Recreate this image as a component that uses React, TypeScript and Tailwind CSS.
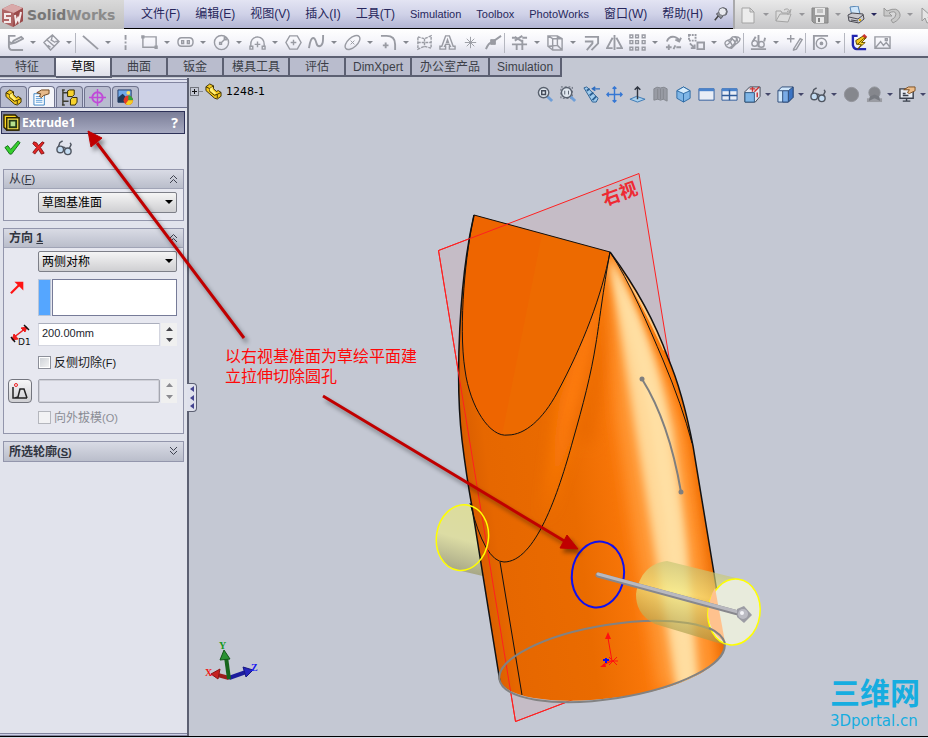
import { useState } from 'react';
import type { ReactNode } from 'react';
import clsx from 'clsx';

interface Tool {
  name: string;
  icon: ReactNode;
  menu?: boolean;
  divider?: boolean;
  active?: boolean;
}

const menus = ['文件(F)', '编辑(E)', '视图(V)', '插入(I)', '工具(T)', 'Simulation', 'Toolbox', 'PhotoWorks', '窗口(W)', '帮助(H)'];

const commandTabs = ['特征', '草图', '曲面', '钣金', '模具工具', '评估', 'DimXpert', '办公室产品', 'Simulation'];

const glasses = (
  <>
    <path d="M2 10 4 4l3-2M14 10l2-4-1-2" fill="none" stroke="#4f5560" strokeWidth="1.5" />
    <circle cx="4.500" cy="11" r="3.500" fill="#c4dcf2" stroke="#4f5560" strokeWidth="1.500" />
    <circle cx="12.500" cy="13" r="3.500" fill="#c4dcf2" stroke="#4f5560" strokeWidth="1.500" />
    <path d="M7 9q2-1 3 1" fill="none" stroke="#4f5560" strokeWidth="1.5" />
  </>
);

const partIcon = (
  <>
    <path d="M1 4l4-3 4 2v3l3 3 2-1 3 2v4l-4 3-3-1-9-8z" fill="#f4c81c" stroke="#3a2e00" />
    <path d="M1 4l4 2 4-3M5 6v3l5 4 3-1 4-2M13 12v4" fill="none" stroke="#3a2e00" />
    <path d="M5 6l3-2v3l4 4-2 1-5-4z" fill="#fff07a" />
  </>
);

const quickTools: Tool[] = [
  { name: 'New', menu: true, icon: <path d="M3 2h8l4 4v11H3zM11 2v4h4" fill="#ececec" stroke="#a3a3a3" /> },
  {
    name: 'Open',
    menu: true,
    icon: <path d="M1 15V5h5l1 2h6v2M1 15l4-7h11l-3 8zM9 4q4-3 6 2M12 5l3 2 1-4" fill="#dcdcdc" stroke="#a3a3a3" />,
  },
  {
    name: 'Save',
    menu: true,
    icon: (
      <>
        <path d="M1 2h16v15H3l-2-2z" fill="#9b9b9b" stroke="#858585" />
        <path d="M4 2h10v7H4zM5 11h8v6H5z" fill="#e8e8e8" />
        <path d="M6 4h6M6 6h6" stroke="#9b9b9b" />
        <path d="M7 12h2v4H7z" fill="#858585" />
      </>
    ),
  },
  {
    name: 'Print',
    menu: true,
    active: true,
    icon: (
      <>
        <path d="M3 1l8-1 2 8-8 2z" fill="#cfe6fa" stroke="#5585b5" />
        <path d="M1 9l4-2 11 1 1 5-5 4-10-2z" fill="#c9c9cf" stroke="#4a4a52" />
        <path d="M2 11l9 2 5-4M4 14l7 1" fill="none" stroke="#4a4a52" />
        <path d="M12 14h2" stroke="#e8b400" strokeWidth="2" />
      </>
    ),
  },
  {
    name: 'Undo',
    menu: true,
    icon: <path d="M1 2v8h8l-3-3q6-3 7 1 0 4-5 6l2 3q8-4 7-9-2-8-13-3z" fill="#c8c8c8" stroke="#999" />,
  },
  { name: 'Select', icon: <path d="M3 2v13l3-3 2 5 3-1-2-5h4z" fill="#e5e5e5" stroke="#999" /> },
];

const sketchTools: Tool[] = [
  {
    name: 'Sketch',
    menu: true,
    icon: <path d="M9 2H2v11q0 4 4 4h11M5 10l2-3 8-4 2 2-8 4zM2 8l3 2" strokeWidth="2" />,
  },
  {
    name: 'Smart Dimension',
    menu: true,
    icon: <path d="M1 9l3-3 8 7-4 4zM4 6l6-5 7 7-5 5M5 12l3 2M8 6l5 3M10 1l-1 5M17 8h-4" strokeWidth="1.500" />,
  },
  { name: 'Line', menu: true, divider: true, icon: <path d="M1 2l16 14" strokeWidth="2" /> },
  { name: 'Centerline', icon: <path d="M8 1v16" strokeWidth="2" strokeDasharray="5 2 2 2" /> },
  { name: 'Rectangle', menu: true, icon: <path d="M2 3h14v11H2zM1 2h2v2H1zM15 13h2v2h-2z" strokeWidth="1.5" /> },
  {
    name: 'Slot',
    menu: true,
    icon: <path d="M5 4h8q4 0 4 4.500t-4 4.500H5q-4 0-4-4.500T5 4zM5 7h2v3H5zM11 7h2v3h-2z" strokeWidth="1.500" />,
  },
  {
    name: 'Circle',
    menu: true,
    icon: (
      <>
        <circle cx="9" cy="9" r="7.500" strokeWidth="1.500" />
        <path d="M7 9h2v2H7zM9 9l4-4M12 4h2v2h-2z" strokeWidth="1.500" />
      </>
    ),
  },
  {
    name: 'Arc',
    menu: true,
    icon: <path d="M2 13Q1 4 9 3q8 1 7 10M1 13h3v3H1zM14 13h3v3h-3zM9 8v6M6 11h6" strokeWidth="1.500" />,
  },
  { name: 'Polygon', icon: <path d="M5 2h8l4 7-4 7H5L1 9zM9 6v6M6 9h6" strokeWidth="1.5" /> },
  {
    name: 'Spline',
    menu: true,
    icon: <path d="M1 15C2 8 4 2 7 5c3 4 1 8 5 8 4-1 4-5 4-12" strokeWidth="2" />,
  },
  {
    name: 'Ellipse',
    menu: true,
    icon: (
      <>
        <ellipse cx="9" cy="9" rx="9.500" ry="5" transform="rotate(-42 9 9)" strokeWidth="1.500" />
        <path d="M7 7l4 4M11 7l-4 4" />
      </>
    ),
  },
  { name: 'Fillet', menu: true, icon: <path d="M1 2h6q9 0 9 9v6M6 9v6M3 12h6" strokeWidth="2" /> },
  {
    name: 'Plane',
    icon: <path d="M2 3l7 2 7-3v13l-7-2-7 3zM9 5v9M2 9h14" strokeWidth="1.500" strokeDasharray="3 1" />,
  },
  {
    name: 'Text',
    icon: <path d="M1 16v-3h2L7 2h4l4 11h2v3h-6v-3h1l-1-2H7l-1 2h1v3zM9 6L8 9h2z" strokeWidth="1.5" />,
  },
  { name: 'Point', icon: <path d="M9 3v12M3 9h12M5 5l8 8M13 5l-8 8" /> },
  {
    name: 'Tangent',
    icon: (
      <>
        <path d="M1 16Q4 9 7 9l10-7" strokeWidth="2" />
        <path d="M6 6h5v5H6z" fill="#999ba3" />
      </>
    ),
  },
  {
    name: 'Trim',
    menu: true,
    divider: true,
    icon: <path d="M1 4h5M12 4h5M1 11h16M4 3l8 5M4 7l8-5M12 6v11M6 10v7" strokeWidth="2" />,
  },
  { name: 'Convert', menu: true, icon: <path d="M1 2h10l5 3v12H6l-5-4zM6 5h10M6 5v12M1 2l5 3M11 2v10l5 5M2 13l9-1" strokeWidth="1.500" /> },
  { name: 'Offset', icon: <path d="M2 3h14v7l-7 7M2 8h8v2l-6 7" strokeWidth="2" /> },
  { name: 'Mirror', icon: <path d="M7 4L1 15h6M11 4l6 11h-6M9 1v16" strokeWidth="2" /> },
  {
    name: 'Pattern',
    menu: true,
    icon: <path d="M1 1h3v3H1zM7 1h3v3H7zM14 1h3v3h-3zM1 7h3v3H1zM7 7h3v3H7zM14 7h3v3h-3zM1 14h3v3H1zM7 14h3v3H7zM14 14h3v3h-3z" strokeWidth="1.5" />,
  },
  { name: 'Modify', icon: <path d="M2 8q2-6 8-5 4 1 5 4M11 6l4 2 2-4M1 14h6M4 11v6M9 16l2-4M12 14h5" strokeWidth="2" /> },
  {
    name: 'Move',
    menu: true,
    icon: (
      <>
        <path d="M1 1h7v6H1z" strokeWidth="2" strokeDasharray="2 1" />
        <path d="M10 9h7v7h-7zM2 10l5 5M7 11v4H3" strokeWidth="2" />
      </>
    ),
  },
  {
    name: 'Mesh',
    icon: <path d="M1 10q0-3 5-4l3-3q6-1 8 2 0 3-5 6l-4 4q-6 0-7-5zM4 7q4 1 5 7M7 5q5 1 5 6M10 3q5 1 4 5M2 12q4-1 7-8M5 15q6-2 9-11" strokeWidth="1.5" />,
  },
  {
    name: 'Display Relations',
    menu: true,
    divider: true,
    icon: (
      <>
        <path d="M1 16h16M9 1v13M3 8l3-5M15 8l1-4" strokeWidth="2" />
        <circle cx="5" cy="10" r="3" strokeWidth="1.5" />
        <circle cx="12" cy="11" r="3" strokeWidth="1.5" />
      </>
    ),
  },
  { name: 'Repair', icon: <path d="M1 5h8M5 1v8M8 16l7-11 2 1-6 10-3 1z" strokeWidth="1.5" /> },
  {
    name: 'Quick Snaps',
    menu: true,
    divider: true,
    icon: (
      <>
        <path d="M1 2h16M2 2v15" strokeWidth="2" />
        <circle cx="10" cy="10" r="5.500" strokeWidth="1.500" />
        <circle cx="10" cy="10" r="1" strokeWidth="2" />
      </>
    ),
  },
  {
    name: 'Rapid Sketch',
    divider: true,
    icon: (
      <>
        <path d="M7 2H2v10q1 4 4 4h10" stroke="#2024b0" strokeWidth="2.500" />
        <path d="M5 7l8-5 3 2-6 6-4 1z" fill="#f5c518" stroke="#5e4700" />
        <path d="M13 1l3 3" stroke="#cc3333" strokeWidth="3" />
        <path d="M13 5L7 11h4l-4 5 8-7h-4l5-5z" fill="#ffdf2b" stroke="#6d5200" />
      </>
    ),
  },
  { name: 'Sketch Picture', icon: <path d="M1 3h16v12H1zM2 14l5-6 3 4 3-3 4 5M12 5h2v2h-2z" strokeWidth="1.500" /> },
];

const magnifier = (
  <>
    <path d="M11 11l5 5" stroke="#6f9fd8" strokeWidth="3" />
    <circle cx="7" cy="7" r="5.5" fill="#dfe6ee" stroke="#59616e" strokeWidth="1.5" />
  </>
);

const viewTools: Tool[] = [
  { name: 'Zoom to Fit', icon: <>{magnifier}<path d="M5 5h4v4H5z" stroke="#444b59" strokeWidth="1.500" /></> },
  { name: 'Zoom to Area', icon: <><path d="M1 1h12v12H1z" stroke="#59616e" strokeDasharray="2 2" />{magnifier}<path d="M5 5v4M9 5v4" stroke="#59616e" /></> },
  {
    name: 'Previous View',
    icon: (
      <>
        <path d="M1 2l3-1 12 12-2 4-4 0z" fill="#9fcbed" stroke="#2c6092" />
        <path d="M4 5l3-2M7 10l4-3M10 15l4-4" stroke="#2c6092" strokeWidth="2" />
        <path d="M10 3h8M13 1l-3 2 3 2" stroke="#2c6cc0" strokeWidth="1.500" />
      </>
    ),
  },
  {
    name: 'Pan',
    icon: <path d="M9 1v16M1 9h16M7 3l2-2 2 2M7 15l2 2 2-2M3 7L1 9l2 2M15 7l2 2-2 2" stroke="#3577d4" strokeWidth="1.5" />,
  },
  {
    name: 'Normal To',
    icon: (
      <>
        <path d="M1 14l7-3 9 3-8 3z" fill="#a7d0ee" stroke="#3a78b4" />
        <path d="M9 14V2M6 4l3-3 3 3" stroke="#2f3540" strokeWidth="1.500" />
      </>
    ),
  },
  {
    name: 'Section',
    icon: <path d="M2 3q3-3 7-1 4-2 7 1v13l-4-2-3 1-3-1-4 1zM6 3v11M12 3v11M9 3v11" fill="#989ba4" stroke="#85888f" />,
  },
  {
    name: 'Orientation',
    icon: (
      <>
        <path d="M9 1l7 4v8l-7 4-7-4V5z" fill="#7fb6e6" stroke="#2d6aa5" />
        <path d="M2 5l7 3 7-3-7-4z" fill="#d5ebfb" stroke="#2d6aa5" />
        <path d="M9 8v9" stroke="#2d6aa5" />
      </>
    ),
  },
  {
    name: 'Single View',
    icon: (
      <>
        <path d="M1 3h16v12H1z" fill="#e8edf6" stroke="#2f5b99" />
        <path d="M1 4h16" stroke="#4a83cc" strokeWidth="3" />
      </>
    ),
  },
  {
    name: 'Four View',
    icon: (
      <>
        <path d="M1 3h16v12H1z" fill="#e8edf6" stroke="#2f5b99" />
        <path d="M1 4h16" stroke="#4a83cc" strokeWidth="3" />
        <path d="M9 4v11M1 10h16" stroke="#2f5b99" strokeWidth="1.500" />
      </>
    ),
  },
  {
    name: 'View Orientation',
    menu: true,
    icon: (
      <>
        <path d="M1 6l5-5h11v10l-5 6H1z" fill="#e3e7ef" stroke="#3b4350" />
        <path d="M1 7h10v10H1z" fill="#7fb6e6" stroke="#2c557f" />
        <path d="M11 6l5-5M9 1v5M6 3h6M14 7v5" stroke="#c33" strokeWidth="1.500" />
      </>
    ),
  },
  {
    name: 'Display Style',
    menu: true,
    icon: (
      <>
        <path d="M1 5l4-4h12v11l-5 5H1z" fill="#cfe6fa" stroke="#2c4a78" />
        <path d="M12 5l5-4v11l-5 5z" fill="#3b74c4" stroke="#2c4a78" />
        <path d="M6 5h6v12H6z" fill="#79abe6" stroke="#2c4a78" />
        <path d="M1 5h5" stroke="#2c4a78" />
      </>
    ),
  },
  { name: 'Hide/Show Items', menu: true, icon: glasses },
  { name: 'Appearance', icon: <circle cx="9" cy="9" r="7.500" fill="#85878d" stroke="#909299" /> },
  {
    name: 'Scene',
    menu: true,
    icon: (
      <>
        <path d="M1 13h16v4H1z" fill="#9a9ca3" />
        <circle cx="9" cy="7" r="6" fill="#85878d" stroke="#8d9097" />
        <path d="M4 11l5-2 5 2 1 5-6-3-6 3z" fill="#777a81" />
      </>
    ),
  },
  {
    name: 'View Settings',
    menu: true,
    icon: (
      <>
        <path d="M1 3h14v10H1z" fill="#e9edf4" stroke="#3a404c" strokeWidth="1.500" />
        <path d="M4 16h8M8 13v3M4 8h3M4 10h6" stroke="#3a404c" strokeWidth="1.500" />
        <path d="M5 4l5-3h7v4l-6 3-2-1 2-3z" fill="#edbd8a" stroke="#7b4f21" />
      </>
    ),
  },
];

const panelTabs: Tool[] = [
  { name: 'Feature Tree', icon: partIcon },
  {
    name: 'Property Manager',
    icon: (
      <>
        <path d="M1 5h11v12H1z" fill="#fff" stroke="#3b83c4" />
        <path d="M3 8h7M3 10h7M3 12h7M3 14h7" stroke="#5a9bd8" />
        <path d="M4 4l5-3h8v4l-6 2-2 2-2-1 1-3z" fill="#e7b98a" stroke="#6b421a" />
      </>
    ),
  },
  {
    name: 'Configuration Manager',
    icon: (
      <>
        <path d="M2 1v16M2 4h6M2 13h6M1 1h3M1 17h3" stroke="#3d3d30" strokeWidth="1.5" />
        <path d="M7 2l2-1h5v5l-2 2H7zM10 11l2-2h5v5l-2 3h-5z" fill="#f8d32c" stroke="#2e2600" />
      </>
    ),
  },
  {
    name: 'DimXpert Manager',
    icon: (
      <>
        <circle cx="9" cy="9" r="5.500" stroke="#c04ad8" strokeWidth="2" />
        <path d="M9 0v18M0 9h18" stroke="#c04ad8" strokeWidth="1.500" />
      </>
    ),
  },
  {
    name: 'Display Manager',
    icon: (
      <>
        <path d="M1 1h14v13H1z" fill="#6fa9ea" stroke="#233c66" />
        <path d="M1 14V9l5-4 9 9z" fill="#203a5a" />
        <circle cx="12" cy="12" r="5" fill="#e33a26" />
        <path d="M12 12V7a5 5 0 0 1 5 5z" fill="#2ca63a" />
        <path d="M12 12h5a5 5 0 0 1-8 4z" fill="#f2d021" />
        <circle cx="12" cy="4" r="2" fill="#ffe45c" />
      </>
    ),
  },
];

function Icon({ children, size = 18 }: { children: ReactNode; size?: number }) {
  return (
    <svg width={size} height={size} viewBox="0 0 18 18" fill="none" aria-hidden="true" className="shrink-0">
      {children}
    </svg>
  );
}

function Caret({ className = 'border-t-[#85888f]' }: { className?: string }) {
  return <span className={clsx('size-0 shrink-0 border-x-[3px] border-t-[3px] border-x-transparent', className)} />;
}

function SketchToolbar() {
  return (
    <div className="flex h-[29px] items-center overflow-hidden border-b-2 border-[#5c6072] bg-linear-to-b from-white via-[#f4f4fa] to-[#dadbe8] pl-[7px]">
      {sketchTools.map((tool) => (
        <div key={tool.name} className="flex shrink-0 items-center">
          {tool.divider && <span className="-ml-1 mr-1.5 h-5 w-px bg-[#b5b7c0]" />}
          <button
            type="button"
            aria-label={tool.name}
            className={clsx('flex items-center gap-1.5 stroke-[#999ba3]', tool.menu ? 'w-9' : 'w-[23px]')}
          >
            <Icon size={17}>{tool.icon}</Icon>
            {tool.menu && <Caret />}
          </button>
        </div>
      ))}
    </div>
  );
}

function Header() {
  return (
    <header className="flex h-[29px] overflow-hidden bg-linear-to-b from-[#e9e9e9] to-[#c6c6c8]">
      <div className="flex w-[124px] shrink-0 items-center gap-1 bg-linear-to-b from-[#d9d9d9] to-[#bebebe] pl-0.5">
        <svg width="21" height="24" viewBox="0 0 21 24" aria-hidden="true">
          <path d="M0 6l10-5 11 4v13l-10 6L0 19z" fill="#ae6666" />
          <path d="M0 6l10-5 11 4-9 5z" fill="#d9a9a9" />
          <path d="M12 10l9-5v13l-10 6z" fill="#9b4b4b" />
          <path d="M9 11H3v4h5v4H2M13 12l1 7 2-4 1 3 2-9" fill="none" stroke="#f4e9e9" strokeWidth="2" />
        </svg>
        <span className="font-['DejaVu_Sans',sans-serif] text-sm font-bold text-[#777]">
          Solid<span className="text-[#8b8b8b]">Works</span>
        </span>
      </div>
      <nav className="flex w-[609px] shrink-0 items-center gap-[15px] border-b border-black bg-linear-to-b from-[#e3e4f3] via-[#d0d2e8] to-[#b2b5d3] pl-[17px] text-[#27275c]">
        {menus.map((menu) => (
          <button key={menu} type="button" className={clsx('whitespace-nowrap', menu.includes('(') ? 'text-xs' : 'text-[11px]')}>
            {menu}
          </button>
        ))}
        <button type="button" aria-label="Pin" className="-ml-1">
          <Icon size={14}>
            <path d="M1 17l5-6" stroke="#444" strokeWidth="2" />
            <path d="M3 9l6 6 3-4a5 5 0 1 0-5-5z" fill="#8f9199" stroke="#3c3e46" />
            <circle cx="11" cy="6" r="5" fill="#e9eaf0" stroke="#55575f" />
          </Icon>
        </button>
      </nav>
      <div className="flex min-w-0 flex-1 items-center overflow-hidden border-l-2 border-[#aaaaac] pl-1">
        {quickTools.map((tool) => (
          <button key={tool.name} type="button" aria-label={tool.name} className="flex w-9 shrink-0 items-center gap-1.5">
            <Icon>{tool.icon}</Icon>
            {tool.menu && <Caret className={tool.active ? 'border-t-[#26265c]' : 'border-t-[#96969a]'} />}
          </button>
        ))}
      </div>
    </header>
  );
}

function CommandTabs() {
  const [current, setCurrent] = useState(1);

  return (
    <div className="flex h-5 items-start bg-[#c4c8d3] text-xs text-[#3c3f48]">
      {commandTabs.map((tab, index) => (
        <button
          key={tab}
          type="button"
          onClick={() => setCurrent(index)}
          className={clsx(
            'shrink-0 border-r-2 border-b-2 border-[#5c6072]',
            tab.length === 2 ? 'w-14' : tab.length > 5 ? 'px-[7px]' : 'px-2',
            index === current ? 'h-5 bg-linear-to-b from-[#fafafc] to-[#dfe0ea] text-black' : 'h-[19px] bg-[#b9bccd]',
          )}
        >
          {tab}
        </button>
      ))}
    </div>
  );
}

function Chevrons({ down }: { down?: boolean }) {
  return (
    <svg width="9" height="9" viewBox="0 0 9 9" fill="none" stroke="#3f4350" aria-hidden="true">
      <path d={down ? 'M1 0l3.500 3.500L8 0M1 4l3.500 3.500L8 4' : 'M1 4l3.500-3.500L8 4M1 8l3.500-3.500L8 8'} />
    </svg>
  );
}

interface GroupProps {
  title: string;
  hotkey: string;
  bold?: boolean;
  children?: ReactNode;
}

function Group({ title, hotkey, bold, children }: GroupProps) {
  return (
    <section className="mx-[3px] border border-[#9396ac] bg-[#e7e8f0]">
      <button
        type="button"
        className={clsx(
          'flex h-[19px] w-full items-center justify-between bg-linear-to-b from-[#d9dbe5] to-[#babecb] px-[5px] text-xs text-[#30343f]',
          children && 'border-b border-[#a0a4b6]',
          bold && 'font-bold',
        )}
      >
        <span>
          {title}
          {hotkey.startsWith('(') ? <span className="text-[11px]">(<u>{hotkey[1]}</u>)</span> : <u>{hotkey}</u>}
        </span>
        <Chevrons down={!children} />
      </button>
      {children}
    </section>
  );
}

function Dropdown({ label, value }: { label: string; value: string }) {
  return (
    <div className="relative ml-[34px] mr-1.5">
      <select
        aria-label={label}
        className="block h-[21px] w-full appearance-none rounded-xs border border-[#7d7f88] bg-linear-to-b from-[#f5f5f5] to-[#cfcfd2] pl-[3px] text-xs text-black"
      >
        <option>{value}</option>
      </select>
      <span className="pointer-events-none absolute top-2 right-1 size-0 border-x-4 border-t-4 border-x-transparent border-t-black" />
    </div>
  );
}

function Spinner({ disabled }: { disabled?: boolean }) {
  const color = disabled ? 'fill-[#8b8b90]' : 'fill-[#44444a]';
  return (
    <div className="flex w-4 flex-col bg-[#f0f0f0]">
      <button type="button" aria-label="Increase" disabled={disabled} className="flex flex-1 items-center justify-center">
        <svg width="7" height="4" viewBox="0 0 7 4" className={color}><path d="M0 4l3.500-4L7 4z" /></svg>
      </button>
      <button type="button" aria-label="Decrease" disabled={disabled} className="flex flex-1 items-center justify-center">
        <svg width="7" height="4" viewBox="0 0 7 4" className={color}><path d="M0 0l3.500 4L7 0z" /></svg>
      </button>
    </div>
  );
}

function PropertyPanel() {
  return (
    <aside className="flex w-[189px] shrink-0 flex-col border-r-2 border-[#5c6072] bg-[#e1e3ec]">
      <div className="mt-px h-1 border-y border-[#8285a0] bg-[#dfe1f0]" />
      <div className="flex h-[25px] items-end gap-px border-b border-[#6c7190] bg-[#cdd1e6]">
        {panelTabs.map((tab, index) => (
          <button
            key={tab.name}
            type="button"
            aria-label={tab.name}
            className={clsx(
              'flex h-[21px] w-[27px] items-center justify-center rounded-t border border-b-0 border-[#70748e]',
              index === 1 ? 'bg-[#f4f5fa]' : 'bg-[#b8bccf]',
            )}
          >
            <Icon size={17}>{tab.icon}</Icon>
          </button>
        ))}
      </div>

      <div className="mt-[3px] mr-0.5 ml-px flex h-[23px] items-center border border-[#2d3158] bg-linear-to-b from-[#7b7e98] to-[#a6a9c0] pr-1.5 pl-px text-white">
        <Icon size={17}>
          <path d="M1 1h12l3 3v13H4l-3-3z" fill="#ffd71f" stroke="#2b2300" strokeWidth="1.500" />
          <path d="M4 4h13v13H4z" fill="#ffe94f" stroke="#2b2300" strokeWidth="1.500" />
          <path d="M7 7h7v7H7z" fill="#b5e08c" stroke="#253b16" strokeWidth="2" />
        </Icon>
        <h2 className="ml-0.5 flex-1 font-['Noto_Sans',sans-serif] text-xs font-bold">Extrude1</h2>
        <button type="button" aria-label="Help" className="font-['Noto_Sans',sans-serif] text-sm leading-none font-bold">?</button>
      </div>

      <div className="flex h-[35px] items-start gap-[9px] px-1 pt-[5px]">
        <button type="button" aria-label="OK">
          <Icon size={17}><path d="M1 9l3-2 3 4 8-9 2 2L8 16H6z" fill="#35cf2d" stroke="#126e17" /></Icon>
        </button>
        <button type="button" aria-label="Cancel">
          <Icon size={17}><path d="M4 3l3 1 2 3 4-4 2 1-4 5 4 6-3 1-3-5-4 5-2-2 4-5-4-4z" fill="#e42525" stroke="#861313" /></Icon>
        </button>
        <button type="button" aria-label="Preview"><Icon size={17}>{glasses}</Icon></button>
      </div>

      <div className="flex flex-col gap-[7px]">
        <Group title="从" hotkey="(F)">
          <div className="pt-[3px] pb-[7px]">
            <Dropdown label="从" value="草图基准面" />
          </div>
        </Group>

        <Group title="方向 " hotkey="1" bold>
          <div className="flex flex-col pt-[3px] pb-1.5 text-xs">
            <Dropdown label="方向 1" value="两侧对称" />
            <div className="mt-[7px] mr-1.5 flex h-[37px]">
              <button type="button" aria-label="Reverse Direction" className="w-[34px] self-start pl-1.5">
                <Icon size={16}>
                  <path d="M1 16L12 5" stroke="#ff1414" strokeWidth="2.500" />
                  <path d="M5 3h10v10z" fill="#ff1414" />
                </Icon>
              </button>
              <span className="mr-px w-[13px] border border-[#b9c5d8] bg-[#55a6ff]" />
              <input aria-label="Direction" readOnly className="min-w-0 flex-1 border border-[#767b98] bg-white" />
            </div>
            <div className="mt-[7px] mr-1.5 flex h-[23px]">
              <svg width="34" height="23" viewBox="0 0 34 23" fill="none" stroke="#ef1c1c" aria-hidden="true">
                <path d="M9 15L22 5" strokeWidth="1.5" />
                <path d="M8 17l6-1-4-5zM23 4l-6 1 4 4z" fill="#ef1c1c" />
                <path d="M20 2l5 5M7 14l4 5" stroke="#111" strokeWidth="1.500" />
                <text x="14" y="22" stroke="none" fill="#111" fontSize="9" fontFamily="DejaVu Sans">D1</text>
              </svg>
              <input
                aria-label="Depth"
                defaultValue="200.00mm"
                className="mr-px min-w-0 flex-1 border border-[#d3d5df] border-t-[#aaaebc] bg-white px-[3px] pb-0.5 text-[11px] text-[#22252e]"
              />
              <Spinner />
            </div>
            <label className="mt-[7px] ml-[34px] flex h-[19px] items-center gap-[3px] text-[#181a20]">
              <input type="checkbox" className="size-[13px] appearance-none border border-[#8c8f99] bg-linear-to-br from-[#cbcfd5] to-[#f6f6f6] ring-1 ring-white ring-inset" />
              <span>反侧切除<span className="text-[11px]">(F)</span></span>
            </label>
            <div className="mt-[7px] mr-1.5 flex h-6">
              <div className="w-[34px] pl-1">
                <button type="button" aria-label="Draft" className="rounded border border-[#73757e] bg-linear-to-b from-[#f7f7f7] to-[#cfcfd3] p-0.5">
                  <Icon size={18}>
                    <path d="M2 5v11h14M4 16l3-1 2-8h4l3 9" stroke="#222" strokeWidth="1.500" />
                    <circle cx="5" cy="3" r="1.500" stroke="#e22" />
                  </Icon>
                </button>
              </div>
              <input aria-label="Draft angle" disabled className="mr-px min-w-0 flex-1 rounded-xs border border-[#a4a6b0] bg-[#e5e6ef] ring-1 ring-[#cfd0d8] ring-inset" />
              <Spinner disabled />
            </div>
            <label className="mt-[5px] ml-[34px] flex h-[19px] items-center gap-[3px] text-[#8b8d95]">
              <input type="checkbox" disabled className="size-[13px] appearance-none border border-[#b4b6bd] bg-[#f2f2f4]" />
              <span>向外拔模<span className="text-[11px]">(O)</span></span>
            </label>
          </div>
        </Group>

        <Group title="所选轮廓" hotkey="(S)" bold />
      </div>

      <div className="mt-auto h-[3px] border-y border-[#8285a0] bg-[#ccd0e5]" />
    </aside>
  );
}

// Model view, drawn in window coordinates
function ModelView() {
  return (
    <svg width="739" height="659" viewBox="189 78 739 659" fill="none" className="absolute top-0 left-0">
      <defs>
        <linearGradient id="body" gradientUnits="userSpaceOnUse" x1="466" y1="525" x2="708" y2="494">
          <stop offset="0" stopColor="#d45a00" />
          <stop offset="0.12" stopColor="#e66700" />
          <stop offset="0.45" stopColor="#ea6b00" />
          <stop offset="0.68" stopColor="#fb780a" />
          <stop offset="0.92" stopColor="#ff7d0c" />
          <stop offset="1" stopColor="#e46500" />
        </linearGradient>
        <linearGradient id="peg" gradientUnits="userSpaceOnUse" x1="470" y1="504" x2="460" y2="575">
          <stop offset="0" stopColor="#dcdc9c" />
          <stop offset="0.5" stopColor="#dcdca4" />
          <stop offset="1" stopColor="#a3a384" />
        </linearGradient>
        <linearGradient id="pegRight" gradientUnits="userSpaceOnUse" x1="700" y1="568" x2="686" y2="636">
          <stop offset="0" stopColor="#c5c573" />
          <stop offset="0.4" stopColor="#f2ee84" />
          <stop offset="1" stopColor="#a89a48" />
        </linearGradient>
        <filter id="soft" x="-50%" y="-10%" width="200%" height="120%">
          <feGaussianBlur stdDeviation="8" />
        </filter>
        <filter id="softer" x="-50%" y="-10%" width="200%" height="120%">
          <feGaussianBlur stdDeviation="4" />
        </filter>
        <clipPath id="bodyClip">
          <path d="M474 215L610 252C634 284 655 322 668 358C681 388 688 420 693 446L713 567L725 643C728 665 680 690 620 697C570 704 512 702 500 682L472 507C468 485 465 465 462 440C455 380 459 280 474 215Z" />
        </clipPath>
      </defs>

      <path d="M438.500 250.500L639 173.500L716 645L515.500 721.500Z" fill="#c5bcc6" stroke="#ff2020" />
      <text x="605" y="206" fill="#ee2a33" fontSize="18" fontWeight="bold" fontFamily="Noto Sans CJK SC" transform="rotate(-20 605 206)">
        右视
      </text>
      <path d="M466 504L500 514V580L457 570Z" fill="url(#peg)" />
      <ellipse cx="462.500" cy="537.500" rx="26" ry="33" transform="rotate(8 462 537)" fill="url(#peg)" />

      <g clipPath="url(#bodyClip)">
        <path d="M440 200H740V720H440Z" fill="url(#body)" />
        <path d="M610 252L604 283L596 343L583 400L545 520L560 400Z" fill="#ff7d10" filter="url(#soft)" />
        <path d="M610 252L604 283L596 343L583 400L572 440L592 445L606 350Z" fill="#e96900" filter="url(#soft)" />
        <path d="M610 252Q612 330 618 420L634 530L660 690H716L702 560L686 440Q662 330 610 252Z" fill="#ff9a38" filter="url(#soft)" />
        <path d="M609 258Q620 330 634 420L650 520L678 700H700L687 545L673 430Q652 330 612 258Z" fill="#ffd898" filter="url(#softer)" />
        <path d="M612 266Q634 340 650 425L664 520L686 700H693L677 520L664 425Q648 340 616 270Z" fill="#ffe0a4" filter="url(#softer)" />
        <path d="M610 252C630 282 648 325 663 360Q682 405 692 443L713 567V440L660 310Z" fill="#f57105" filter="url(#softer)" />
        <path d="M618 266Q640 300 663 350L668 353Q645 302 618 266Z" fill="#ffc880" />
      </g>

      <path d="M474 215L610 252C602 295 583 345 557 393C543 419 525 435 508 435C490 438 470 407 465 370C458 325 466 250 474 215Z" fill="#ed6a00" />
      <path d="M474 215L542 234L502 435C485 433 468 400 465 370C458 325 466 250 474 215Z" fill="#ee6500" />

      <g stroke="#111">
        <path d="M474 215L610 252C602 295 583 345 557 393C543 419 525 435 508 435C490 438 470 407 465 370C458 325 466 250 474 215Z" />
        <path d="M474 215C459 280 455 380 462 440C465 465 468 485 472 507L500 682" strokeWidth="1.5" />
        <path d="M610 252C634 284 655 322 668 358C681 388 688 420 693 446L713 567L725 643" strokeWidth="1.5" />
        <path d="M610 252C630 282 648 325 663 360Q682 405 692 443" />
        <path d="M610 252C603 290 599 325 596 343C591 375 583 405 573 440C558 495 535 562 504 562Q485 562 470 503" />
        <path d="M500 562L522 695" />
      </g>
      <path d="M508 224L438.500 250.500L515.500 721.500L567 702" stroke="#ff2020" />
      <ellipse cx="612" cy="661.500" rx="114" ry="37" transform="rotate(-9 612 661.500)" stroke="#828282" strokeWidth="2" />
      <path d="M642 379Q669 422 681 492" stroke="#7f7f7f" strokeWidth="2" />
      <circle cx="642" cy="379" r="2.500" fill="#7f7f7f" />
      <circle cx="681" cy="492" r="2.500" fill="#7f7f7f" />
      <ellipse cx="462.500" cy="537.500" rx="26" ry="33" transform="rotate(8 462 537)" stroke="#ffff00" strokeWidth="1.500" />

      <path d="M667 561L740 579L725 645L655 624C640 616 636 606 636 594C639 574 650 563 667 561Z" fill="url(#pegRight)" fillOpacity="0.65" />
      <ellipse cx="734" cy="612" rx="26" ry="33" transform="rotate(8 734 612)" fill="#e8ebdc" stroke="#ffff00" strokeWidth="1.5" />
      <path d="M715 588L725 642Q711 635 708 615Q709 597 715 588Z" fill="#ffc28e" />
      <path d="M709 628Q722 634 725 643" stroke="#828282" strokeWidth="2" />
      <ellipse cx="598" cy="574.500" rx="26" ry="33" transform="rotate(8 598 574)" stroke="#1010ef" strokeWidth="2" />
      <path d="M598 575L738 613" stroke="#87878d" strokeWidth="5" strokeLinecap="round" />
      <path d="M598 574L738 612" stroke="#b9b9c0" strokeWidth="3" strokeLinecap="round" />
      <path d="M744 606L752 615L744 623L737 617V609Z" fill="#9c9ca4" />
      <circle cx="743" cy="614" r="5" fill="#bcbcc4" />
      <circle cx="742" cy="613" r="2" fill="#f4f4f8" />

      <g stroke="#ff1010">
        <path d="M612 661L608 638M612 661L603 665M607 661h11M609 657l8 8M617 657l-8 8" />
        <path d="M608 632l-3 7h6zM600 667l5-4 1 4z" fill="#ff1010" strokeWidth="0" />
        <path d="M603 660h6M606 658v5" stroke="#1010ef" strokeWidth="2" />
      </g>

      {/* Axis triad */}
      <path d="M229 678L214 674" stroke="#9d1c1c" strokeWidth="4" />
      <path d="M220 669L211 674L218 679Z" fill="#c52222" stroke="#8d1616" />
      <path d="M229 678L246 672" stroke="#1c1c9d" strokeWidth="4" />
      <path d="M243 667L253 670L246 677Z" fill="#2626bd" stroke="#171780" />
      <path d="M229 679L226 657" stroke="#17661c" strokeWidth="4" />
      <path d="M224 650L220 660L230 659Z" fill="#2b9234" stroke="#135718" />
      <g fontSize="10" fontFamily="Liberation Serif" fontWeight="bold">
        <text x="205" y="676" fill="#f01818">X</text>
        <text x="219" y="649" fill="#169a20">Y</text>
        <text x="251" y="671" fill="#1818f0">Z</text>
      </g>
    </svg>
  );
}

function Viewport() {
  return (
    <main className="relative min-w-0 flex-1 overflow-hidden bg-[#c4c8d3]">
      <ModelView />
      <div className="relative flex h-8 items-center justify-between">
        <div className="flex items-center pb-1.5 pl-px">
          <button type="button" aria-label="Expand" className="flex size-[9px] items-center justify-center border border-[#72757d]">
            <svg width="5" height="5" viewBox="0 0 5 5" stroke="#111" aria-hidden="true"><path d="M0 2.500h5M2.500 0v5" /></svg>
          </button>
          <span className="mr-0.5 h-px w-1 bg-[#85888f]" />
          <Icon size={17}>{partIcon}</Icon>
          <span className="ml-1 pt-0.5 font-['DejaVu_Sans',sans-serif] text-[11px] text-black">1248-1</span>
        </div>
        <div className="flex items-center justify-end">
          {viewTools.map((tool) => (
            <button
              key={tool.name}
              type="button"
              aria-label={tool.name}
              className={clsx('flex shrink-0 items-center gap-1 pl-1', tool.menu ? 'w-[33px]' : 'w-[23px]')}
            >
              <Icon size={17}>{tool.icon}</Icon>
              {tool.menu && <Caret className="border-t-[#44476a]" />}
            </button>
          ))}
        </div>
      </div>
      <div className="absolute right-2 bottom-1.5 flex flex-col text-[#16ade0]">
        <span className="text-3xl leading-9 font-bold">三维网</span>
        <span className="font-['DejaVu_Sans',sans-serif] text-[15px] leading-[18px]">3Dportal.cn</span>
      </div>
    </main>
  );
}

function Annotations() {
  return (
    <div className="pointer-events-none absolute inset-0">
      <svg width="928" height="659" viewBox="0 78 928 659" className="absolute top-0 left-0 drop-shadow-[3px_4px_2px_rgba(0,0,0,0.4)]">
        <path d="M244 338L97 143M323 396L566 542" stroke="#c00000" strokeWidth="3" />
        <path d="M88 131L102 138L91 147ZM578 549L567 535L560 548Z" fill="#c00000" stroke="#c00000" />
      </svg>
      <p className="absolute top-[269px] left-[225px] text-base leading-5 text-[#ff0808]">
        以右视基准面为草绘平面建
        <br />
        立拉伸切除圆孔
      </p>
    </div>
  );
}

export default function App() {
  return (
    <div className="flex min-h-screen flex-col overflow-hidden bg-[#c4c8d3] font-['Liberation_Sans','Noto_Sans_CJK_SC',sans-serif]">
      <Header />
      <SketchToolbar />
      <CommandTabs />
      <div className="relative flex flex-1 overflow-hidden">
        <PropertyPanel />
        <Viewport />
        <button
          type="button"
          aria-label="Collapse panel"
          className="absolute top-[305px] left-[187px] flex h-[29px] w-2.5 flex-col items-center justify-evenly rounded-r border border-l-0 border-[#5c6072] bg-[#dfe1ec]"
        >
          {[0, 1, 2].map((i) => (
            <svg key={i} width="4" height="6" viewBox="0 0 4 6" fill="#444490" aria-hidden="true"><path d="M4 0v6L0 3z" /></svg>
          ))}
        </button>
        <Annotations />
      </div>
      <div className="flex h-0.5 border-t border-black bg-[#d9dbe6]" />
    </div>
  );
}
